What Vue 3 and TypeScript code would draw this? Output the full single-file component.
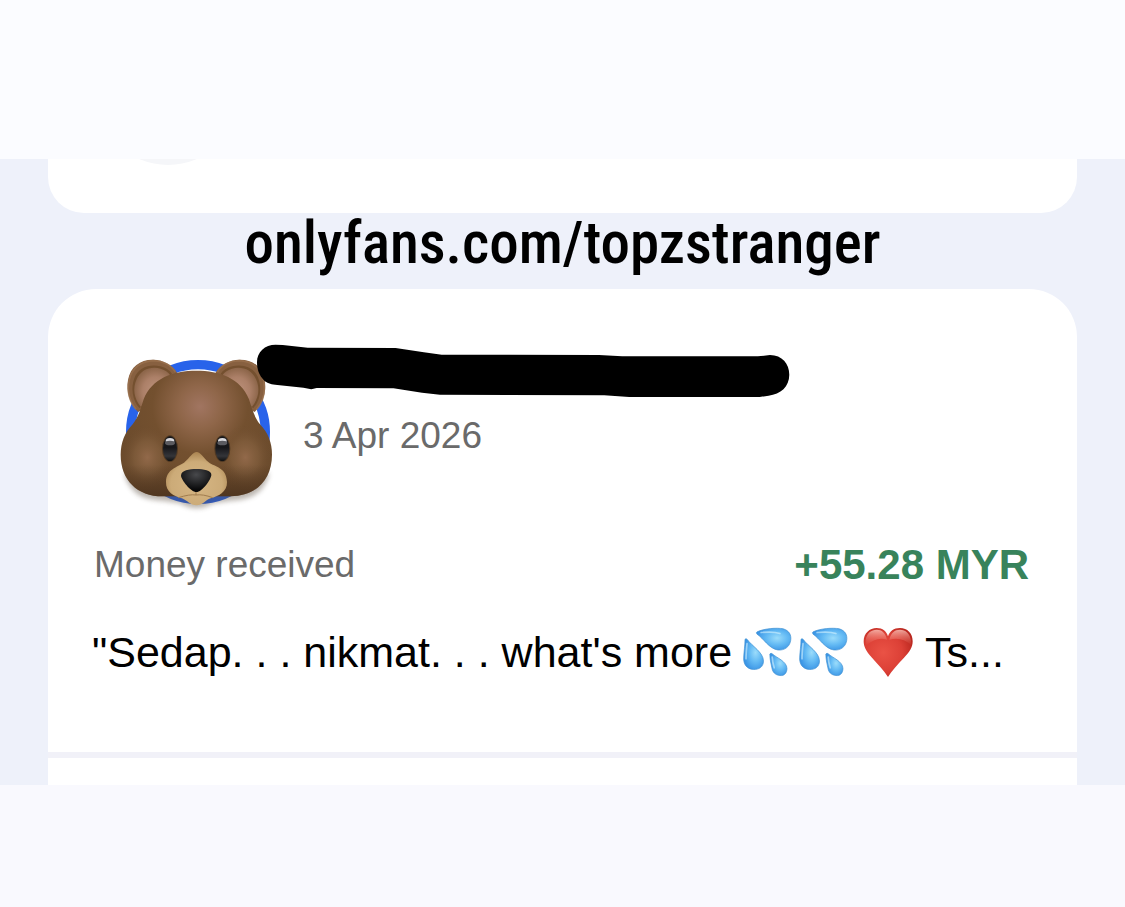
<script setup lang="ts">
interface Transaction {
  date: string
  label: string
  amount: string
  before: string
  after: string
}

const transaction: Transaction = {
  date: '3 Apr 2026',
  label: 'Money received',
  amount: '+55.28 MYR',
  before: '"Sedap. . . nikmat. . . what\'s more',
  after: 'Ts...',
}
const drops: number[] = [1, 2]
</script>

<template>
  <main class="page">
    <section class="feed">
      <div class="card previous">
        <span class="previous-avatar"></span>
      </div>

      <h1 class="caption">onlyfans.com/topzstranger</h1>

      <article class="card entry">
        <header class="sender">
          <svg class="avatar" viewBox="54 42 480 492" role="img" aria-label="Bear">
            <defs>
              <radialGradient id="head" gradientUnits="userSpaceOnUse" cx="300" cy="200" r="260">
                <stop offset="0" stop-color="#a17561" />
                <stop offset=".25" stop-color="#8f6649" />
                <stop offset=".55" stop-color="#73502f" />
                <stop offset="1" stop-color="#6b4b2c" />
              </radialGradient>
              <radialGradient id="cheek">
                <stop offset="0" stop-color="#92694a" />
                <stop offset=".5" stop-color="#84603f" stop-opacity=".65" />
                <stop offset="1" stop-color="#6e4c2e" stop-opacity="0" />
              </radialGradient>
              <radialGradient id="ear" cx=".6" cy=".6" r=".6">
                <stop offset="0" stop-color="#bd927c" />
                <stop offset=".6" stop-color="#ac8068" />
                <stop offset="1" stop-color="#8d664a" />
              </radialGradient>
              <linearGradient id="shade" x1="0" y1="0" x2="0" y2="1">
                <stop offset=".75" stop-color="#3e2818" stop-opacity="0" />
                <stop offset="1" stop-color="#3e2818" stop-opacity=".6" />
              </linearGradient>
              <radialGradient id="muzzle" cx=".5" cy=".6" r=".6">
                <stop offset="0" stop-color="#d6b684" />
                <stop offset=".7" stop-color="#ccab78" />
                <stop offset="1" stop-color="#a98350" />
              </radialGradient>
              <linearGradient id="eye" x1="0" y1="0" x2="0" y2="1">
                <stop offset="0" stop-color="#17171a" />
                <stop offset=".45" stop-color="#17171a" />
                <stop offset=".8" stop-color="#343539" />
                <stop offset="1" stop-color="#111" />
              </linearGradient>
              <radialGradient id="nose" cx=".5" cy=".25" r=".65">
                <stop offset="0" stop-color="#48494c" />
                <stop offset="1" stop-color="#09090a" />
              </radialGradient>
              <filter id="soft" x="-20%" y="-20%" width="140%" height="150%">
                <feGaussianBlur stdDeviation="8" />
              </filter>
              <path
                id="face"
                d="M289 92C358 92 422 114 447 178C456 205 462 230 480 253C504 278 516 308 516 344C516 420 466 469 392 469L188 469C112 469 62 420 62 344C62 308 74 278 98 253C117 230 122 205 131 178C156 114 220 92 289 92Z"
              />
            </defs>
            <circle cx="294" cy="276" r="202" fill="#fff" stroke="#2863ea" stroke-width="28" />
            <path d="M72 400C90 460 126 480 188 482L240 490Q290 520 340 490L392 482C458 480 494 456 508 400Z" fill="#544638" opacity=".4" filter="url(#soft)" />
            <g v-for="side in [1, -1]" :key="side" :transform="side === 1 ? undefined : 'translate(578 0) scale(-1 1)'">
              <path d="M114 216C88 190 78 154 84 120C91 79 122 58 160 59C190 60 218 74 231 98L165 190Z" fill="#876040" />
              <path d="M108 208C88 184 81 154 87 122C95 83 124 63 160 62C188 62 214 76 226 96" fill="none" stroke="#9c7350" stroke-width="5" opacity=".7" />
              <path d="M118 204C97 182 92 143 103 115C114 83 148 71 181 79C198 84 209 90 216 101L142 190Z" fill="#74502f" />
              <path d="M122 200C102 176 97 145 110 118C123 88 153 78 182 86C196 90 206 97 210 105L144 190Z" fill="url(#ear)" />
            </g>
            <use href="#face" fill="url(#head)" />
            <ellipse cx="142" cy="352" rx="80" ry="98" fill="url(#cheek)" />
            <ellipse cx="436" cy="352" rx="80" ry="98" fill="url(#cheek)" />
            <use href="#face" fill="url(#shade)" />
            <path
              d="M290 336C302 336 308 352 326 367C346 382 379 382 381 426C382 456 354 469 332 475C316 480 308 496 290 496C270 496 262 481 246 475C222 469 197 456 198 426C199 386 232 382 252 368C270 353 278 336 290 336Z"
              fill="url(#muzzle)"
            />
            <path d="M288 450V465M235 473Q269 462 288 465Q309 462 338 473" fill="none" stroke="#a07c4e" stroke-width="3" />
            <path d="M243 407C243 391 268 387 289 387C311 387 334 391 334 404C334 418 306 456 289 456C272 456 243 418 243 407Z" fill="url(#nose)" />
            <g v-for="x in [210, 367]" :key="x">
              <ellipse :cx="x" cy="326" rx="24" ry="40" fill="#503923" />
              <ellipse :cx="x" cy="326" rx="21" ry="37" fill="url(#eye)" />
              <ellipse :cx="x" cy="303" rx="13" ry="9" fill="#d9d9dd" />
              <ellipse :cx="x" cy="309" rx="15" ry="7" fill="#5b5b60" />
            </g>
          </svg>
          <div class="details">
            <svg class="marker" viewBox="48 42 1492 162" preserveAspectRatio="none" aria-hidden="true">
              <path
                d="M48 96C48 66 70 44 100 44L120 45L190 53L436 54L515 67L565 74L1005 75L1070 79L1450 79L1484 75C1518 75 1538 102 1538 134C1538 170 1514 192 1480 197L1455 201L1090 201L1020 196L560 194L510 188L430 175L215 174L200 178L178 173L105 165C88 164 80 161 70 154C52 134 48 116 48 96Z"
                fill="#000"
              />
            </svg>
            <time class="date" datetime="2026-04-03">{{ transaction.date }}</time>
          </div>
        </header>

        <div class="summary">
          <span class="label">{{ transaction.label }}</span>
          <strong class="amount">{{ transaction.amount }}</strong>
        </div>

        <p class="message">
          <span>{{ transaction.before }}</span>
          <svg v-for="drop in drops" :key="drop" class="drops" viewBox="70 56 146 148" role="img" aria-label="Sweat droplets">
            <defs>
              <radialGradient id="water" cx=".6" cy=".45" r=".6">
                <stop offset="0" stop-color="#9bdcfb" />
                <stop offset=".5" stop-color="#65bbf4" />
                <stop offset="1" stop-color="#3b95e5" />
              </radialGradient>
            </defs>
            <g fill="url(#water)" stroke="#4292d2" stroke-width="2">
              <path d="M112 70C132 60 171 57 190 61C207 66 215 79 212 96C209 115 193 126 174 124C148 121 130 88 112 77Q108 72 112 70Z" />
              <path d="M76 92Q79 88 83 93C96 112 131 131 131 157C131 174 118 183 101 182C81 181 71 166 72 147C73 126 76 112 76 92Z" />
              <path d="M150 136Q153 131 158 136C168 146 201 158 201 179C201 193 192 202 180 200C167 199 158 191 156 177C153 162 150 151 150 136Z" />
            </g>
            <g fill="none" stroke="#d5f3ff" stroke-width="5" stroke-linecap="round" opacity=".6">
              <path d="M124 72Q160 68 180 75" />
              <path d="M82 105Q79 133 79 150" />
              <path d="M157 145Q158 162 163 177" />
            </g>
          </svg>
          <svg class="heart" viewBox="430 46 150 154" role="img" aria-label="Red heart">
            <defs>
              <radialGradient id="red" cx=".4" cy=".5" r=".65">
                <stop offset="0" stop-color="#ea5245" />
                <stop offset=".6" stop-color="#dc4036" />
                <stop offset="1" stop-color="#b8261e" />
              </radialGradient>
              <linearGradient id="gloss" x1="0" y1="0" x2="0" y2="1">
                <stop offset="0" stop-color="#ffd3c9" stop-opacity=".75" />
                <stop offset="1" stop-color="#f47e70" stop-opacity="0" />
              </linearGradient>
            </defs>
            <path d="M505 198C494 180 476 161 457 140C438 120 432 106 432 91C432 67 450 51 471 51C489 51 501 61 505 76C510 61 522 51 541 51C563 51 579 67 579 91C579 109 570 123 553 140C532 162 516 180 505 198Z" fill="url(#red)" />
            <path d="M438 88C441 66 455 56 471 56C487 56 497 65 502 86C480 79 461 86 438 104ZM509 86C514 65 525 56 541 56C558 56 570 67 574 88V101C555 85 534 79 509 86Z" fill="url(#gloss)" />
          </svg>
          <span>{{ transaction.after }}</span>
        </p>
      </article>
      <div class="next"></div>
    </section>
  </main>
</template>

<style>
body {
  margin: 0;
}
</style>

<style scoped>
.page {
  box-sizing: border-box;
  min-height: 100vh;
  padding-top: 159px;
  background: linear-gradient(#fbfcff 159px, #f9f9fe 159px);
  font-family: "Liberation Sans", Arial, sans-serif;
  color: #000;
}
.feed {
  padding: 0 48px;
  background: #eef1fa;
}
.card {
  background: #fff;
}
.previous {
  height: 54px;
  overflow: hidden;
  border-radius: 0 0 36px 36px;
}
.previous-avatar {
  display: block;
  width: 144px;
  height: 144px;
  margin: -138px 0 0 48px;
  border-radius: 50%;
  background: #f5f6f9;
}
.caption {
  height: 76px;
  margin: 0;
  font: 500 59px/60px "Roboto Condensed", "Liberation Sans Narrow", sans-serif;
  text-align: center;
}
.entry {
  padding: 56px 48px 72px 44px;
  border-radius: 48px 48px 0 0;
}
.sender {
  display: flex;
  padding-left: 26px;
}
.avatar {
  flex: none;
  width: 160px;
  height: 164px;
  margin-top: 9px;
}
.details {
  position: relative;
  padding: 67px 0 0 25px;
}
.marker {
  position: absolute;
  top: -1px;
  left: -21px;
  width: 533px;
  height: 54px;
}
.date,
.label {
  color: #6a6a6a;
  font-size: 37px;
  line-height: 48px;
}
.summary {
  display: flex;
  align-items: center;
  justify-content: space-between;
  margin-top: 23px;
}
.label {
  padding-left: 2px;
}
.amount {
  color: #38835b;
  font-size: 42px;
  line-height: 48px;
}
.message {
  display: flex;
  align-items: center;
  margin: 35px 0 0;
  font-size: 43px;
  line-height: 56px;
  white-space: nowrap;
}
.drops {
  flex: none;
  width: 49px;
  height: 50px;
  margin-left: 7px;
}
.drops:first-of-type {
  margin-left: 11px;
}
.heart {
  flex: none;
  width: 50px;
  height: 52px;
  margin: 0 12px 0 15px;
}
.next {
  height: 27px;
  border-top: 6px solid #f1f1f8;
  background: #fff;
}
</style>
